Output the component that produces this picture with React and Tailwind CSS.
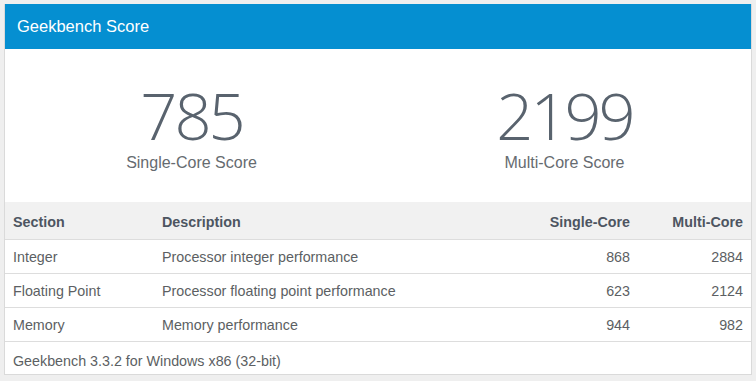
import React from "react";

const rows = [
  { section: "Integer", desc: "Processor integer performance", single: 868, multi: 2884 },
  { section: "Floating Point", desc: "Processor floating point performance", single: 623, multi: 2124 },
  { section: "Memory", desc: "Memory performance", single: 944, multi: 982 },
];

function Score({ value, label }) {
  return (
    <div className="flex flex-col items-center">
      <div
        className="text-[65px] leading-[66px] tracking-[-3px] text-[#59636e] font-light"
        style={{ fontFamily: '"Open Sans", sans-serif' }}
      >
        {value}
      </div>
      <div className="text-[16px] leading-[16px] text-[#666b70] mt-[7px]">{label}</div>
    </div>
  );
}

export default function App() {
  return (
    <div
      className="w-[756px] h-[381px] bg-[#efefef] pt-[4px] pl-[4px] pr-[4px]"
      style={{ fontFamily: '"Liberation Sans", Arial, sans-serif' }}
    >
      <div className="w-[748px] border-l border-r border-b border-[#dadada] bg-white">
        {/* Header */}
        <div className="h-[45px] bg-[#058fd1] flex items-center pl-[12px] text-white text-[16.5px]">
          Geekbench Score
        </div>

        {/* Scores */}
        <div className="grid grid-cols-2 h-[153px] pt-[33px]">
          <Score value="785" label="Single-Core Score" />
          <Score value="2199" label="Multi-Core Score" />
        </div>

        {/* Table */}
        <table className="w-full table-fixed border-collapse text-[14.3px] text-[#5c5f63]">
          <colgroup>
            <col className="w-[149px]" />
            <col />
            <col className="w-[112px]" />
            <col className="w-[113px]" />
          </colgroup>
          <thead>
            <tr className="bg-[#f1f1f1] h-[37px] border-b border-[#dddddd]">
              <th className="text-left font-bold text-[#4d5561] pl-[8px] pt-[4px]">Section</th>
              <th className="text-left font-bold text-[#4d5561] pl-[8px] pt-[4px]">Description</th>
              <th className="text-right font-bold text-[#4d5561] pr-[8px] pt-[4px]">Single-Core</th>
              <th className="text-right font-bold text-[#4d5561] pr-[8px] pt-[4px]">Multi-Core</th>
            </tr>
          </thead>
          <tbody>
            {rows.map((r) => (
              <tr key={r.section} className="h-[34px] border-b border-[#dddddd]">
                <td className="pl-[8px] pt-[4px]">{r.section}</td>
                <td className="pl-[8px] pt-[4px]">{r.desc}</td>
                <td className="text-right pr-[8px] pt-[4px]">{r.single}</td>
                <td className="text-right pr-[8px] pt-[4px]">{r.multi}</td>
              </tr>
            ))}
            <tr className="h-[33px]">
              <td colSpan={4} className="pl-[8px] pt-[7px]">
                Geekbench 3.3.2 for Windows x86 (32-bit)
              </td>
            </tr>
          </tbody>
        </table>
      </div>
    </div>
  );
}
